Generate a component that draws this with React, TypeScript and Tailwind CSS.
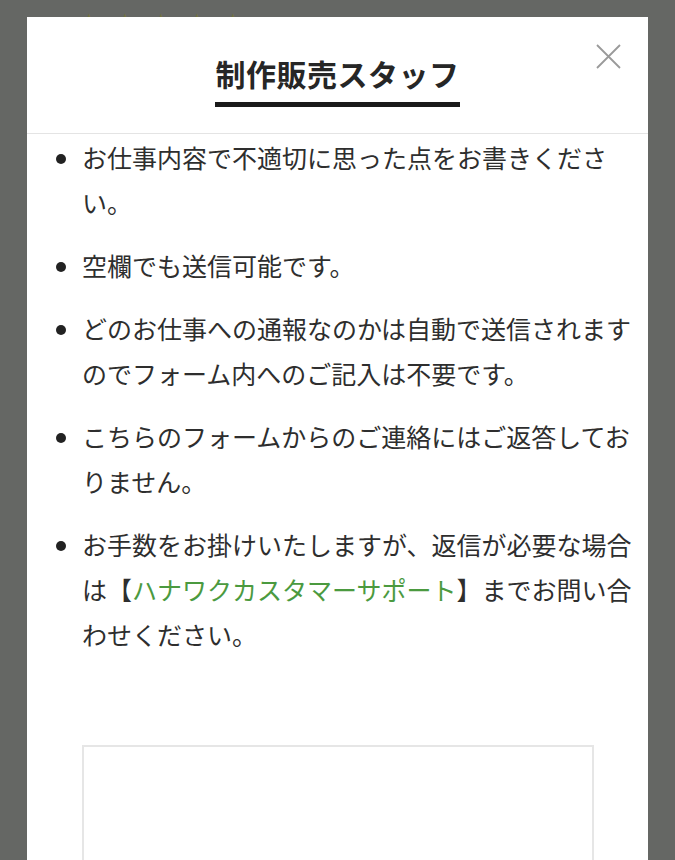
import React from 'react';

const FONT = { fontFamily: '"Noto Sans CJK JP", "Noto Sans", sans-serif' };

function CloseIcon() {
  return (
    <svg width="25" height="25" viewBox="0 0 25 25" fill="none" stroke="#9a9a9a" strokeWidth="1.8">
      <path d="M1 1 L24 24 M24 1 L1 24" />
    </svg>
  );
}

export default function App() {
  return (
    <div className="relative h-[860px] w-full overflow-hidden bg-[#656764]" style={FONT}>
      {/* page behind the overlay, mostly hidden */}
      <div className="flex gap-[14px] pl-[78px] pt-[10px] text-[22px] leading-none text-[#74733f]">
        <span>★</span>
        <span>★</span>
        <span>★</span>
        <span>★</span>
        <span>★</span>
      </div>

      <div className="absolute left-[27px] top-[17px] h-[843px] w-[621px] bg-white">
        <div className="grid grid-cols-[1fr_auto_1fr] border-b border-[#e4e4e4]">
          <div />
          <div className="flex flex-col items-center pt-[36px] pb-[26px]">
            <h2 className="text-[30px] font-bold leading-[40px] tracking-[0.5px] text-[#262626]">制作販売スタッフ</h2>
            <div className="mt-[9px] h-[5px] w-[245px] bg-[#1a1a1a]" />
          </div>
          <div className="flex justify-end pt-[27px] pr-[27px]">
            <button type="button" aria-label="閉じる" className="h-[25px] w-[25px]">
              <CloseIcon />
            </button>
          </div>
        </div>

        <ul className="list-disc pl-[55px] pr-[8px] pt-[1px] text-[25px] leading-[45px] text-[#2e2e2e] marker:text-[#222]">
          <li className="mb-[18px]">お仕事内容で不適切に思った点をお書きください。</li>
          <li className="mb-[18px]">空欄でも送信可能です。</li>
          <li className="mb-[18px]">どのお仕事への通報なのかは自動で送信されますのでフォーム内へのご記入は不要です。</li>
          <li className="mb-[18px]">こちらのフォームからのご連絡にはご返答しておりません。</li>
          <li>
            お手数をお掛けいたしますが、返信が必要な場合は【<span className="text-[#4b9a3f]">ハナワクカスタマーサポート</span>】までお問い合わせください。
          </li>
        </ul>

        <div className="pl-[55px] pt-[88px]">
          <div className="h-[200px] w-[512px] border-2 border-[#e6e6e6]" />
        </div>
      </div>
    </div>
  );
}
